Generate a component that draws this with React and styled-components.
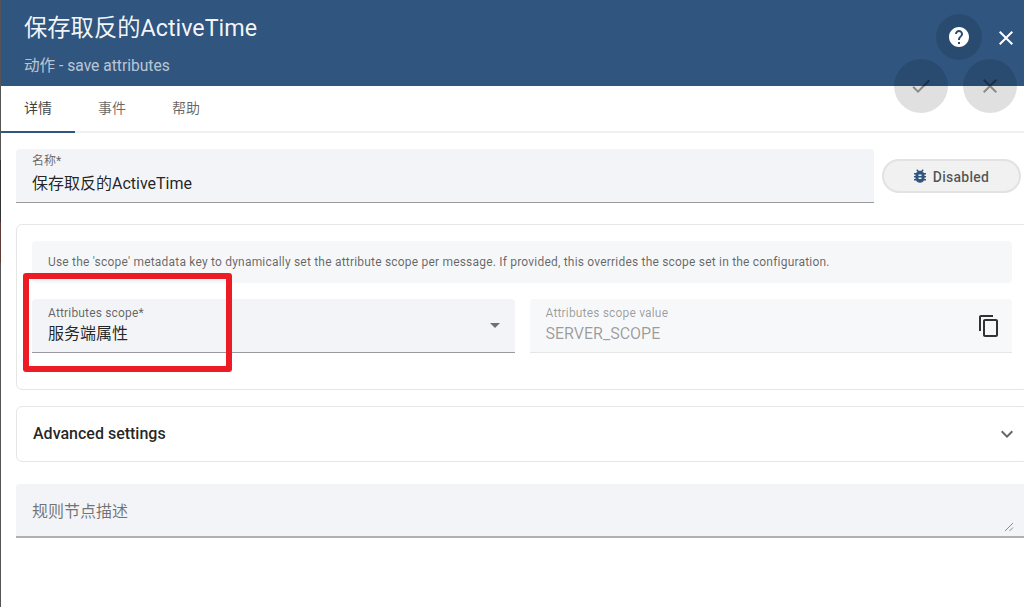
import React from "react";
import styled, { createGlobalStyle } from "styled-components";

const Global = createGlobalStyle`
  html, body { margin: 0; padding: 0; background: #fff; }
  body { font-family: Roboto, "Noto Sans CJK SC", sans-serif; }
  * { box-sizing: border-box; }
`;
const Page = styled.div`
  position: relative; width: 1024px; height: 607px; overflow: hidden; background: #fff;
  border-left: 1px solid #555;
  border-image: linear-gradient(to bottom, #555 0, #555 160px, #333 160px, #333 222px, #5e3b38 222px, #5e3b38 263px, #555 263px, #555 100%) 1;
`;
const Header = styled.header`
  height: 86px; background: #305680; color: #fff; padding: 12px 0 0 23px;
  display: flex; flex-direction: column;
`;
const Title = styled.div`font-size: 23.3px; line-height: 32px; color: rgba(255,255,255,.95);`;
const Subtitle = styled.div`font-size: 15.6px; line-height: 20px; margin-top: 12px; color: rgba(255,255,255,.68);`;
const Tabs = styled.nav`display: flex; height: 47px; border-bottom: 2px solid #f0f0f0;`;
const Tab = styled.div`
  width: 74px; height: 47px; padding-bottom: 4px; display: flex; align-items: center; justify-content: center;
  font-size: 14px; color: ${p => p.$active ? "rgba(0,0,0,.76)" : "rgba(0,0,0,.6)"};
  border-bottom: 2px solid ${p => p.$active ? "#305680" : "transparent"};
`;
const Content = styled.main`
  width: 1012px; margin-left: 15px; padding-top: 16px; display: flex; flex-direction: column;
`;
const NameRow = styled.div`display: flex; align-items: center; gap: 8px; margin-bottom: 21px; width: 1005px;`;
const Filled = styled.div`
  position: relative; flex: 1; height: 54px; padding: 6px 16px 0;
  background: ${p => p.$disabled ? "#f7f8fa" : "#f2f4f8"}; border-radius: 4px 4px 0 0;
  border-bottom: 1px solid ${p => p.$disabled ? "#e6e6e6" : "#9a9a9e"};
`;
const FieldLabel = styled.div`
  font-size: 12px; line-height: 16px; height: 16px; margin-bottom: 1px; letter-spacing: .17px;
  color: ${p => p.$disabled ? "rgba(0,0,0,.38)" : "rgba(0,0,0,.6)"};
`;
const NameLabel = styled(FieldLabel)`margin-top: -2px; margin-bottom: 3px; letter-spacing: 0;`;
const FieldValue = styled.div`font-size: 16px; line-height: 24px; color: ${p => p.$disabled ? "rgba(0,0,0,.38)" : "rgba(0,0,0,.87)"};`;
const DebugButton = styled.button`
  width: 139px; height: 34px; flex: none; border: 2px solid #e2e2e2; border-radius: 17px; background: #f1f1f1;
  display: flex; align-items: center; justify-content: center; gap: 4px; padding: 0 3px 0 0;
  font: 500 14px Roboto, sans-serif; letter-spacing: .25px; color: rgba(0,0,0,.66);
`;
const ButtonLabel = styled.span`position: relative; top: 1px;`;
const BugIcon = styled.span`display: flex; color: #305680;`;
const Card = styled.section`
  border: 1px solid #e6e6e6; border-radius: 6px; background: #fff;
`;
const ScopeCard = styled(Card)`
  height: 166px; padding: 16px 15px; display: flex; flex-direction: column; gap: 16px; margin-bottom: 16px;
`;
const Info = styled.div`
  height: 42px; background: #f6f7f9; border-radius: 4px; padding: 0 16px; display: flex; align-items: center;
  font-size: 12px; letter-spacing: .2px; color: rgba(0,0,0,.6);
`;
const ScopeRow = styled.div`display: flex; gap: 15px;`;
const Caret = styled.span`
  position: absolute; right: 15px; top: 24px; width: 0; height: 0;
  border-left: 5px solid transparent; border-right: 5px solid transparent; border-top: 5px solid rgba(0,0,0,.54);
`;
const CopyBtn = styled.span`position: absolute; right: 11px; top: 15px; display: flex; color: rgba(0,0,0,.8);`;
const Advanced = styled(Card)`
  height: 56px; display: flex; align-items: center; justify-content: space-between;
  padding: 0 8px 2px 16px; margin-bottom: 22px;
  font-size: 16px; font-weight: 500; color: rgba(0,0,0,.87);
`;
const ChevronIcon = styled.span`display: flex; color: rgba(0,0,0,.6); position: relative; top: 1px;`;
const Description = styled.div`
  position: relative; height: 54px; background: #f2f4f8; border-bottom: 2px solid #b0b0b4; border-radius: 4px 4px 0 0;
  padding: 16px 16px 0; font-size: 16px; line-height: 24px; color: rgba(0,0,0,.55);
`;
const Resize = styled.svg`position: absolute; right: 13px; top: 37px;`;
const HelpBtn = styled.button`
  position: absolute; left: 935px; top: 14px; width: 46px; height: 46px; border-radius: 50%; border: 0; padding: 0;
  background: rgba(0,0,0,.12); color: #fff; display: flex; align-items: center; justify-content: center;
`;
const CloseBtn = styled.button`
  position: absolute; left: 993px; top: 26px; width: 24px; height: 24px; border: 0; padding: 0; background: none;
  color: #fff; display: flex; align-items: center; justify-content: center;
`;
const Fab = styled.button`
  position: absolute; left: ${p => p.$left}px; top: 59px; width: 54px; height: 54px; border-radius: 50%; border: 0; padding: 0;
  background: rgba(0,0,0,.12); color: rgba(0,0,0,.38); display: flex; align-items: center; justify-content: center;
`;
const Highlight = styled.div`
  position: absolute; left: 22px; top: 273px; width: 209px; height: 99px;
  border: 6px solid #ed1c24; border-radius: 3px; pointer-events: none;
`;

const Ic = ({ d, size = 24 }) => (
  <svg width={size} height={size} viewBox="0 0 24 24" fill="currentColor"><path d={d} /></svg>
);
const CLOSE = "M19 6.41 17.59 5 12 10.59 6.41 5 5 6.41 10.59 12 5 17.59 6.41 19 12 13.41 17.59 19 19 17.59 13.41 12z";
const CHECK = "M9 16.17 4.83 12l-1.42 1.41L9 19 21 7l-1.41-1.41z";
const HELP = "M12 2C6.48 2 2 6.48 2 12s4.48 10 10 10 10-4.48 10-10S17.52 2 12 2zm1 17h-2v-2h2v2zm2.07-7.75-.9.92C13.45 12.9 13 13.5 13 15h-2v-.5c0-1.1.45-2.1 1.17-2.83l1.24-1.26c.37-.36.59-.86.59-1.41 0-1.1-.9-2-2-2s-2 .9-2 2H8c0-2.21 1.79-4 4-4s4 1.79 4 4c0 .88-.36 1.68-.93 2.25z";
const BUG = "M20 8h-2.81c-.45-.78-1.07-1.45-1.82-1.96L17 4.41 15.59 3l-2.17 2.17C12.96 5.06 12.49 5 12 5s-.96.06-1.41.17L8.41 3 7 4.41l1.62 1.63C7.88 6.55 7.26 7.22 6.81 8H4v2h2.09c-.05.33-.09.66-.09 1v1H4v2h2v1c0 .34.04.67.09 1H4v2h2.81c1.04 1.79 2.97 3 5.19 3s4.15-1.21 5.19-3H20v-2h-2.09c.05-.33.09-.66.09-1v-1h2v-2h-2v-1c0-.34-.04-.67-.09-1H20V8zm-6 8h-4v-2h4v2zm0-4h-4v-2h4v2z";
const COPY = "M16 1H4c-1.1 0-2 .9-2 2v14h2V3h12V1zm3 4H8c-1.1 0-2 .9-2 2v14c0 1.1.9 2 2 2h11c1.1 0 2-.9 2-2V7c0-1.1-.9-2-2-2zm0 16H8V7h11v14z";
const CHEVRON = "M7.41 8.59 12 13.17l4.59-4.58L18 10l-6 6-6-6z";

export default function App() {
  return (
    <Page>
      <Global />
      <Header>
        <Title>保存取反的ActiveTime</Title>
        <Subtitle>动作 - save attributes</Subtitle>
      </Header>
      <Tabs>
        <Tab $active>详情</Tab>
        <Tab>事件</Tab>
        <Tab>帮助</Tab>
      </Tabs>
      <Content>
        <NameRow>
          <Filled>
            <NameLabel>名称*</NameLabel>
            <FieldValue>保存取反的ActiveTime</FieldValue>
          </Filled>
          <DebugButton>
            <BugIcon><Ic d={BUG} size={18} /></BugIcon>
            <ButtonLabel>Disabled</ButtonLabel>
          </DebugButton>
        </NameRow>
        <ScopeCard>
          <Info>Use the 'scope' metadata key to dynamically set the attribute scope per message. If provided, this overrides the scope set in the configuration.</Info>
          <ScopeRow>
            <Filled>
              <FieldLabel>Attributes scope*</FieldLabel>
              <FieldValue>服务端属性</FieldValue>
              <Caret />
            </Filled>
            <Filled $disabled>
              <FieldLabel $disabled>Attributes scope value</FieldLabel>
              <FieldValue $disabled>SERVER_SCOPE</FieldValue>
              <CopyBtn><Ic d={COPY} /></CopyBtn>
            </Filled>
          </ScopeRow>
        </ScopeCard>
        <Advanced>
          Advanced settings
          <ChevronIcon><Ic d={CHEVRON} /></ChevronIcon>
        </Advanced>
        <Description>
          规则节点描述
          <Resize width="12" height="12" viewBox="0 0 12 12" fill="none" stroke="#8a8a8a" strokeWidth="1">
            <path d="M2 10 10 2M6.5 10 10 6.5" />
          </Resize>
        </Description>
      </Content>
      <HelpBtn><Ic d={HELP} /></HelpBtn>
      <CloseBtn><Ic d={CLOSE} /></CloseBtn>
      <Fab $left={893}><Ic d={CHECK} /></Fab>
      <Fab $left={962}><Ic d={CLOSE} /></Fab>
      <Highlight />
    </Page>
  );
}
